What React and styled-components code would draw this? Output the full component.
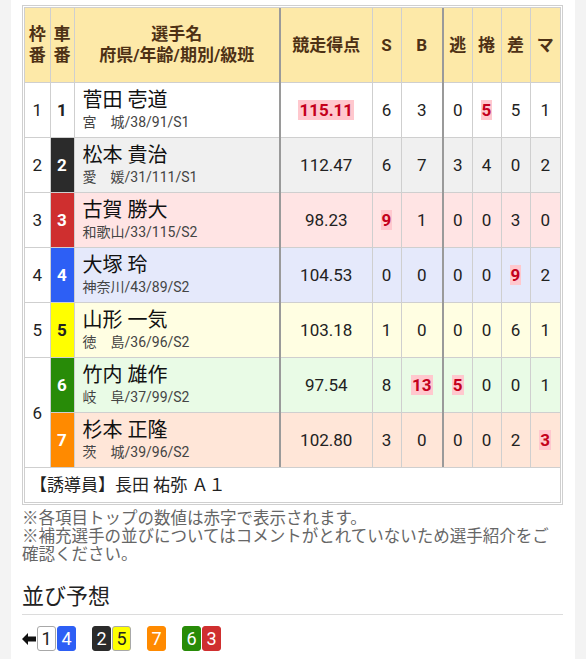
import React from "react";
import styled, { createGlobalStyle, css } from "styled-components";

const GlobalStyle = createGlobalStyle`
    body {
        margin: 0;
        background: #f3f3f3;
        font-family: Roboto, "Noto Sans CJK JP", sans-serif;
        color: #222;
    }
`;

const CAR_COLORS = {
    1: { bg: "#ffffff", fg: "#222", border: "#a8a8a8" },
    2: { bg: "#2b2b2b", fg: "#fff" },
    3: { bg: "#cf2f2f", fg: "#fff" },
    4: { bg: "#2d5ff5", fg: "#fff" },
    5: { bg: "#ffff00", fg: "#222", border: "#a8a8a8" },
    6: { bg: "#288b08", fg: "#fff" },
    7: { bg: "#ff8a00", fg: "#fff" },
};

const ROW_TINTS = {
    1: "#ffffff",
    2: "#f0f0f0",
    3: "#ffe4e4",
    4: "#e5e9fb",
    5: "#fffee2",
    6: "#e9fbe6",
    7: "#ffe6d8",
};

const riders = [
    { frame: 1, car: 1, name: "菅田 壱道", sub: "宮　城/38/91/S1", score: "115.11", hiScore: true, stats: [6, 3, 0, 5, 5, 1], hi: [3] },
    { frame: 2, car: 2, name: "松本 貴治", sub: "愛　媛/31/111/S1", score: "112.47", stats: [6, 7, 3, 4, 0, 2], hi: [] },
    { frame: 3, car: 3, name: "古賀 勝大", sub: "和歌山/33/115/S2", score: "98.23", stats: [9, 1, 0, 0, 3, 0], hi: [0] },
    { frame: 4, car: 4, name: "大塚 玲", sub: "神奈川/43/89/S2", score: "104.53", stats: [0, 0, 0, 0, 9, 2], hi: [4] },
    { frame: 5, car: 5, name: "山形 一気", sub: "徳　島/36/96/S2", score: "103.18", stats: [1, 0, 0, 0, 6, 1], hi: [] },
    { frame: 6, span: 2, car: 6, name: "竹内 雄作", sub: "岐　阜/37/99/S2", score: "97.54", stats: [8, 13, 5, 0, 0, 1], hi: [1, 2] },
    { car: 7, name: "杉本 正隆", sub: "茨　城/39/96/S2", score: "102.80", stats: [3, 0, 0, 0, 2, 3], hi: [5] },
];

const colWidths = [25, 24, 206, 92, 29, 42, 29, 29, 29, 30];
const statHeads = ["S", "B", "逃", "捲", "差", "マ"];

const Page = styled.div`
    box-sizing: border-box;
    min-height: 100vh;
    margin: 0 11px;
    padding: 5px 12px 0 11px;
    background: #fff;
`;

const OuterBox = styled.div`
    border: 1px solid #cfcfcf;
    padding: 1px;
`;

const InnerBox = styled.div`
    border: 1px solid #cfcfcf;
`;

const Table = styled.table`
    width: 100%;
    border-collapse: collapse;
    border-style: hidden;
    table-layout: fixed;
`;

const darkLine = css`
    border-left: 2px solid #9a9a9a;
`;

const HeadCell = styled.th`
    height: 74px;
    padding: 0;
    background: #fde9a8;
    color: #4e3115;
    font-size: 17px;
    line-height: 21px;
    font-weight: bold;
    text-align: center;
    border: 1px solid #cfcfcf;
    ${(p) => p.$dark && darkLine}
`;

const Row = styled.tr`
    background: ${(p) => p.$tint};
`;

const Cell = styled.td`
    height: 54px;
    padding: 0;
    font-size: 17px;
    text-align: center;
    vertical-align: middle;
    border: 1px solid #cfcfcf;
    ${(p) => p.$dark && darkLine}
`;

const FrameCell = styled(Cell)`
    background: #fff;
`;

const CarCell = styled(Cell)`
    background: ${(p) => p.$bg};
    color: ${(p) => p.$fg};
    font-weight: bold;
`;

const NameCell = styled(Cell)`
    text-align: left;
    padding-left: 8px;
`;

const Name = styled.div`
    font-size: 20px;
    line-height: 24px;
    color: #111;
`;

const Sub = styled.div`
    font-size: 14px;
    line-height: 20px;
    color: #444;
`;

const Hi = styled.span`
    display: inline-block;
    padding: 0 1px;
    line-height: 20px;
    background: #ffc8ce;
    color: #c4001c;
    font-weight: bold;
`;

const Guide = styled.div`
    border-top: 1px solid #cfcfcf;
    height: 34px;
    line-height: 34px;
    padding: 0 5px;
    font-size: 17px;
`;

const Notes = styled.p`
    margin: 5px 0 0;
    font-size: 16.5px;
    line-height: 18px;
    color: #666;
`;

const Heading = styled.h2`
    margin: 17px 0 0;
    padding-bottom: 2px;
    font-size: 22px;
    line-height: 31px;
    font-weight: normal;
    color: #222;
    border-bottom: 1px solid #dcdcdc;
`;

const Lineup = styled.div`
    display: flex;
    align-items: center;
    gap: 16px;
    margin-top: 11px;
`;

const Group = styled.div`
    display: flex;
    align-items: center;
    gap: 1px;
`;

const Chip = styled.span`
    box-sizing: border-box;
    width: 19px;
    height: 25px;
    display: flex;
    align-items: center;
    justify-content: center;
    border-radius: 3px;
    font-size: 18px;
    background: ${(p) => p.$bg};
    color: ${(p) => p.$fg};
    border: 1px solid ${(p) => p.$border || p.$bg};
`;

function Value({ hi, children }) {
    return hi ? <Hi>{children}</Hi> : <>{children}</>;
}

function CarChip({ n }) {
    const c = CAR_COLORS[n];
    return (
        <Chip $bg={c.bg} $fg={c.fg} $border={c.border}>
            {n}
        </Chip>
    );
}

const lineup = [[1, 4], [2, 5], [7], [6, 3]];

export default function App() {
    return (
        <>
            <GlobalStyle />
            <Page>
                <OuterBox>
                    <InnerBox>
                        <Table>
                            <colgroup>
                                {colWidths.map((w, i) => (
                                    <col key={i} style={{ width: w }} />
                                ))}
                            </colgroup>
                            <thead>
                                <tr>
                                    <HeadCell>枠<br />番</HeadCell>
                                    <HeadCell>車<br />番</HeadCell>
                                    <HeadCell>
                                        選手名
                                        <br />
                                        府県/年齢/期別/級班
                                    </HeadCell>
                                    <HeadCell $dark>競走得点</HeadCell>
                                    {statHeads.map((h, i) => (
                                        <HeadCell key={h} $dark={i === 2}>
                                            {h}
                                        </HeadCell>
                                    ))}
                                </tr>
                            </thead>
                            <tbody>
                                {riders.map((r) => {
                                    const c = CAR_COLORS[r.car];
                                    return (
                                        <Row key={r.car} $tint={ROW_TINTS[r.car]}>
                                            {r.frame ? (
                                                <FrameCell rowSpan={r.span || 1}>
                                                    {r.frame}
                                                </FrameCell>
                                            ) : null}
                                            <CarCell $bg={c.bg} $fg={c.fg}>
                                                {r.car}
                                            </CarCell>
                                            <NameCell>
                                                <Name>{r.name}</Name>
                                                <Sub>{r.sub}</Sub>
                                            </NameCell>
                                            <Cell $dark>
                                                <Value hi={r.hiScore}>{r.score}</Value>
                                            </Cell>
                                            {r.stats.map((s, i) => (
                                                <Cell key={i} $dark={i === 2}>
                                                    <Value hi={r.hi.includes(i)}>{s}</Value>
                                                </Cell>
                                            ))}
                                        </Row>
                                    );
                                })}
                            </tbody>
                        </Table>
                        <Guide>【誘導員】長田 祐弥 Ａ１</Guide>
                    </InnerBox>
                </OuterBox>
                <Notes>
                    ※各項目トップの数値は赤字で表示されます。
                    <br />
                    ※補充選手の並びについてはコメントがとれていないため選手紹介をご確認ください。
                </Notes>
                <Heading>並び予想</Heading>
                <Lineup>
                    <Group>
                        <svg width="14" height="12" viewBox="0 0 14 12">
                            <polygon points="0,6 6,0 6,3.5 14,3.5 14,8.5 6,8.5 6,12" fill="#111" />
                        </svg>
                        {lineup[0].map((n) => (
                            <CarChip key={n} n={n} />
                        ))}
                    </Group>
                    {lineup.slice(1).map((g, i) => (
                        <Group key={i}>
                            {g.map((n) => (
                                <CarChip key={n} n={n} />
                            ))}
                        </Group>
                    ))}
                </Lineup>
            </Page>
        </>
    );
}
